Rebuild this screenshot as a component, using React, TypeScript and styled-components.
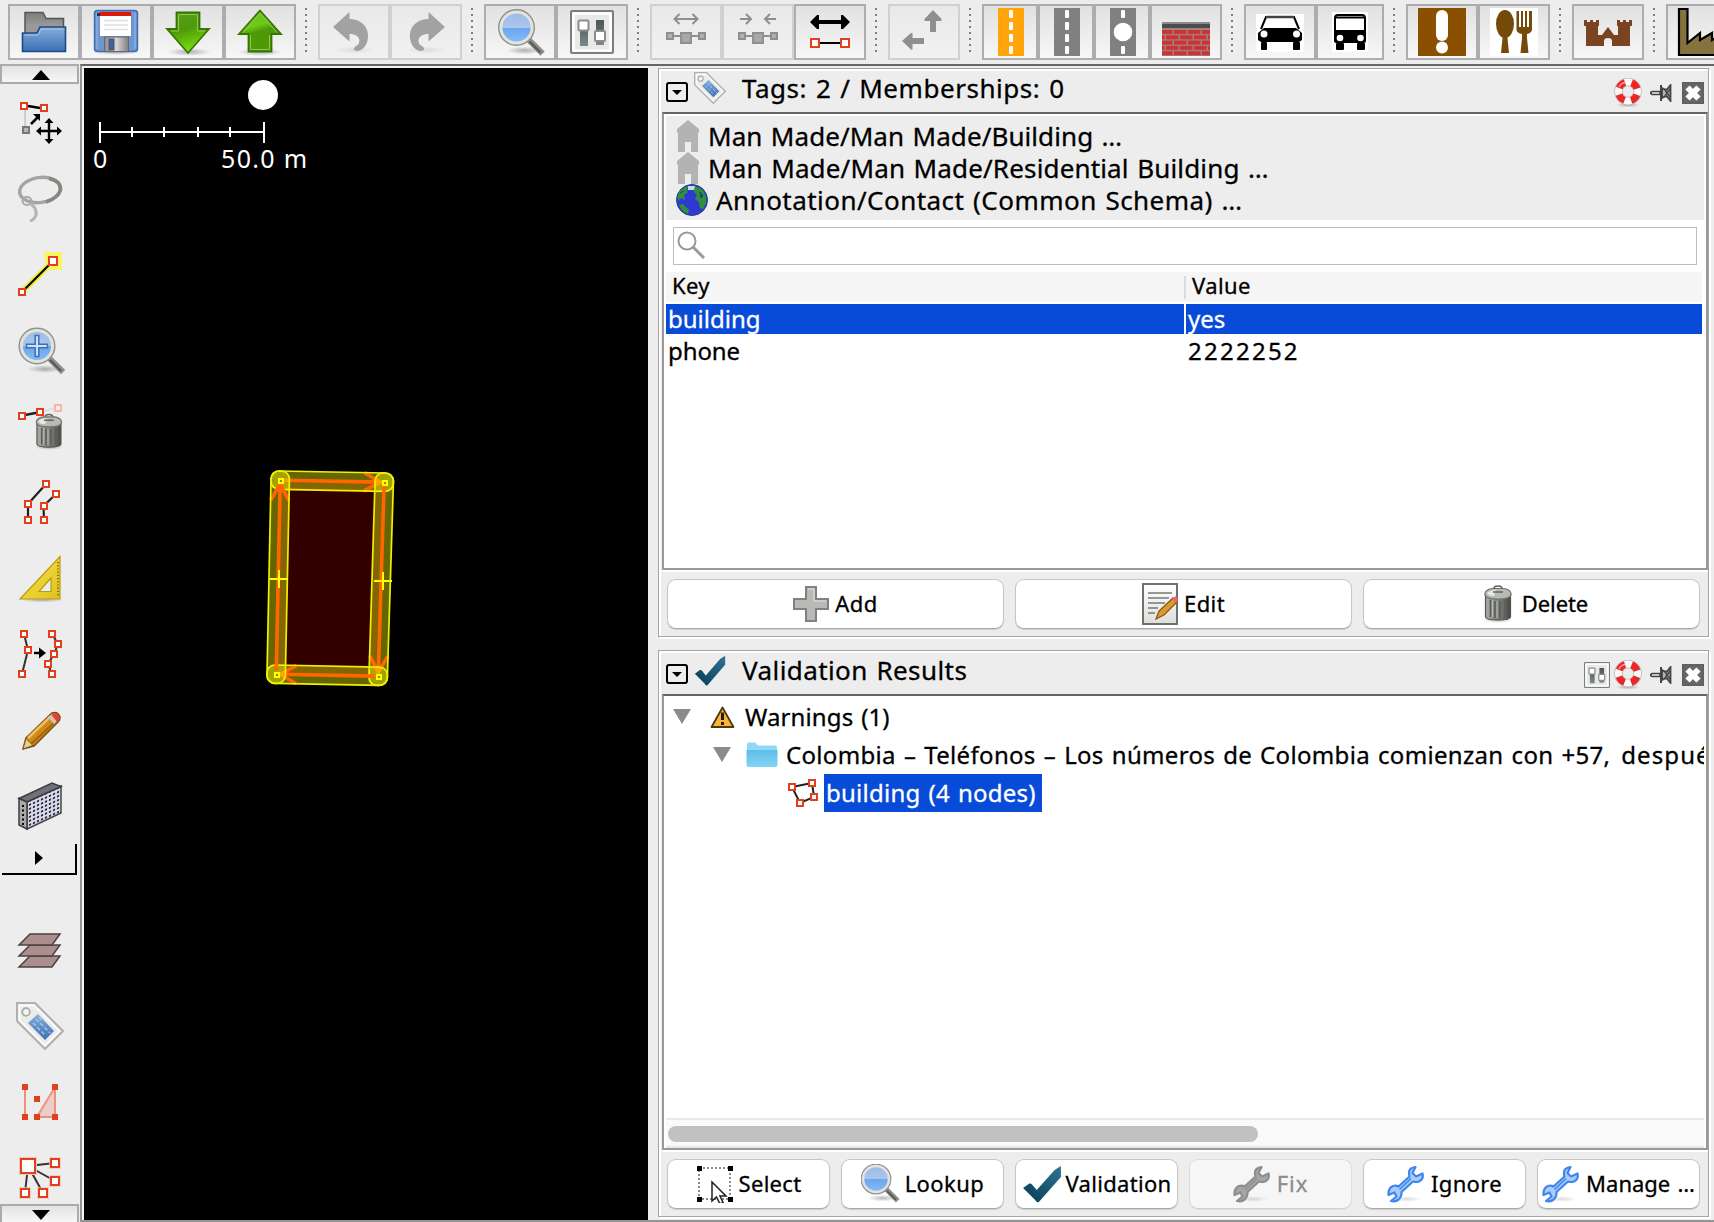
import React from 'react';
import styled, { createGlobalStyle } from 'styled-components';

const Global = createGlobalStyle`
  * { box-sizing: border-box; }
  body { margin: 0; background: #ededed; overflow: hidden; }
  svg { display: block; flex: none; }
`;

const FONT = '"Noto Sans", "Open Sans", sans-serif';

const Window = styled.div`
  width: 1714px; height: 1222px; overflow: hidden; background: #ededed; color: #000;
  font-family: ${FONT}; display: flex; flex-direction: column;
`;
const Toolbar = styled.header`
  height: 64px; flex: none; display: flex; padding: 4px 0 0 8px; overflow: hidden;
`;
const Group = styled.div`display: flex; flex: none; height: 56px;`;
const ToolButton = styled.button<{ $w?: number; $off?: boolean }>`
  width: ${p => p.$w ?? 72}px; height: 56px; flex: none; padding: 0; margin: 0;
  border: 2px solid ${p => (p.$off ? '#d0d0d0' : '#adadad')};
  background: ${p => (p.$off ? 'linear-gradient(#e9e9e9,#f1f1f1)' : 'linear-gradient(#e1e1e1,#f7f7f7)')};
`;
const Separator = styled.div`
  width: 22px; height: 44px; flex: none; margin-top: 4px;
  background: repeating-linear-gradient(#7d7d7d 0 2px, transparent 2px 6px) 9px 0 / 2px 100% no-repeat;
`;
const Main = styled.div`flex: 1; min-height: 0; display: flex;`;
const ToolColumn = styled.nav`
  width: 80px; flex: none; display: flex; flex-direction: column; overflow: hidden;
`;
const ScrollButton = styled.button`
  width: 79px; height: 20px; flex: none; padding: 0; border: 2px solid #ababab;
  background: linear-gradient(#e2e2e2,#f7f7f7);
`;
const Tool = styled.div<{ $h?: number }>`height: ${p => p.$h ?? 76}px; flex: none; overflow: hidden;`;
const Expander = styled.div`
  width: 75px; height: 31px; flex: none; margin: 0 0 38px 2px; border: solid #000; border-width: 0 2px 2px 0;
`;
const Workspace = styled.main`
  flex: 1; min-width: 0; display: flex; border: solid #949494; border-width: 2px 0 2px 2px; border-top-color: #666;
`;
const MapView = styled.section`
  width: 566px; flex: none; padding: 2px 0 0 2px; background: #f4f4f4;
`;
const Side = styled.aside`
  flex: 1; min-width: 0; display: flex; flex-direction: column; gap: 13px; padding: 2px 5px 3px 10px;
`;
const Panel = styled.section<{ $h: number }>`
  height: ${p => p.$h}px; flex: none; border: 1px solid #a6a6a6; display: flex; flex-direction: column;
  box-shadow: 2px 2px 0 #fff, inset 2px 2px 0 #fff;
`;
const PanelHeader = styled.div`
  height: 43px; flex: none; display: flex; align-items: flex-start; padding: 2px 4px 0 7px;
`;
const HeaderIcons = styled.div`margin-left: auto; display: flex; padding-top: 7px; height: 38px;`;
const Content = styled.div`
  flex: 1; min-height: 0; min-width: 0; margin-left: 3px; background: #fff; border: 2px solid #999; border-top-color: #666;
  box-shadow: 0 2px 0 #fff; display: flex; flex-direction: column;
`;
const Actions = styled.div`
  height: 66px; flex: none; display: flex; gap: 11px; padding: 9px 8px 7px 8px;
`;
const Action = styled.button<{ $off?: boolean }>`
  flex: 1 1 0; min-width: 0; height: 50px; padding: 0; display: flex; align-items: center; justify-content: center;
  font-family: inherit; color: ${p => (p.$off ? '#8c8c8c' : '#000')}; overflow: hidden;
  background: ${p => (p.$off ? '#f6f6f6' : '#fff')}; border: 1px solid ${p => (p.$off ? '#dcdcdc' : '#c6c6c6')};
  border-bottom-color: ${p => (p.$off ? '#cfcfcf' : '#a9a9a9')}; border-radius: 9px;
  box-shadow: 0 1px 1px rgba(0,0,0,${p => (p.$off ? 0.05 : 0.14)});
  & > span { padding-bottom: 2px; line-height: 28px; }
`;
const Text = styled.span<{ $s: number; $ls?: number; $lh?: number; $ml?: number }>`
  font-size: ${p => p.$s}px; line-height: ${p => p.$lh ?? 30}px; letter-spacing: ${p => p.$ls ?? 0}px;
  margin-left: ${p => p.$ml ?? 0}px; white-space: pre; flex: none; word-spacing: 1.5px;
  -webkit-text-stroke: 0.3px currentColor;
`;
const Presets = styled.div`background: #ededed; margin: 2px 2px 0; height: 104px; padding: 4px 0 0 10px; flex: none;`;
const Preset = styled.div`display: flex; height: 32px; align-items: center;`;
const Search = styled.div`
  height: 38px; margin: 7px 9px 7px 9px; border: 1px solid #bdbdbd; background: #fff; padding: 3px; flex: none;
`;
const Row = styled.div<{ $selected?: boolean }>`
  display: grid; grid-template-columns: 518px 1fr; gap: 2px; height: 30px; margin: 0 4px 2px 2px; flex: none;
  & > div { padding-left: 2px; display: flex; align-items: center; background: ${p => (p.$selected ? '#084bd9' : '#fff')}; }
  color: ${p => (p.$selected ? '#fff' : '#000')};
`;
const HeadRow = styled.div`
  display: grid; grid-template-columns: 518px 1fr; height: 30px; margin: 0 4px 2px 2px;
  background: #f5f5f5; flex: none; padding-bottom: 3px;
  & > div { padding-left: 6px; display: flex; align-items: center; }
  & > div + div { border-left: 2px solid #dcdcdc; margin-top: 4px; padding-bottom: 4px; }
`;
const Tree = styled.div`flex: 1; min-height: 0; padding: 2px 2px 0; overflow: hidden;`;
const Node = styled.div<{ $indent: number }>`
  height: 38px; display: flex; align-items: center; padding-left: ${p => p.$indent}px; overflow: hidden;
`;
const Selected = styled.span`
  height: 38px; background: #084bd9; color: #fff; display: flex; align-items: center; padding: 0 7px 0 2px; margin-left: 6px; width: 218px;
`;
const Scrollbar = styled.div`
  height: 30px; flex: none; margin: 0 2px; border: solid #e9e9e9; border-width: 2px 0; background: #fafafa; padding: 6px 0 0 2px;
`;
const Thumb = styled.div`width: 590px; height: 16px; border-radius: 8px; background: #c1c1c1;`;
const Spacer = styled.div<{ $w: number }>`width: ${p => p.$w}px; flex: none;`;
const Down = styled.div<{ $y: number }>`padding-top: ${p => p.$y}px;`;

/* ---------- drawing helpers ---------- */
const Sq = ({ x, y, s = 8, c = '#e0401c', f = '#fff' }: { x: number; y: number; s?: number; c?: string; f?: string }) => (
  <rect x={x - s / 2 + 1} y={y - s / 2 + 1} width={s - 2} height={s - 2} fill={f} stroke={c} strokeWidth="2" />
);

const HiddenSvg = styled.svg`position: absolute;`;
const Defs = () => (
  <HiddenSvg width="0" height="0">
    <defs>
      <linearGradient id="blue" x2="0" y2="1"><stop offset="0" stopColor="#86aedb" /><stop offset="1" stopColor="#3a6fb4" /></linearGradient>
      <linearGradient id="gray" x2="0" y2="1"><stop offset="0" stopColor="#7c7c7c" /><stop offset=".6" stopColor="#9a9a9a" /></linearGradient>
      <linearGradient id="green" x2=".3" y2="1"><stop offset="0" stopColor="#5a9e26" /><stop offset=".5" stopColor="#4e9a06" /><stop offset="1" stopColor="#78dc14" /></linearGradient>
      <linearGradient id="greenUp" x2=".3" y2="1"><stop offset="0" stopColor="#6bb52c" /><stop offset=".45" stopColor="#6ccb16" /><stop offset=".6" stopColor="#4e9a06" /><stop offset="1" stopColor="#4e9a06" /></linearGradient>
      <linearGradient id="lens" x2="0" y2="1"><stop offset="0" stopColor="#9dbbe6" /><stop offset=".5" stopColor="#aac6ee" /><stop offset=".52" stopColor="#6ca6ec" /><stop offset="1" stopColor="#85bdf8" /></linearGradient>
      <linearGradient id="can"><stop offset="0" stopColor="#a9aca6" /><stop offset=".35" stopColor="#8b8e88" /><stop offset=".7" stopColor="#6d706a" /><stop offset="1" stopColor="#454843" /></linearGradient>
      <linearGradient id="metal"><stop offset="0" stopColor="#8a8a8a" /><stop offset=".5" stopColor="#d6d6d6" /><stop offset="1" stopColor="#7f7f7f" /></linearGradient>
      <linearGradient id="slot" x2="0" y2="1"><stop offset="0" stopColor="#4d5557" /><stop offset="1" stopColor="#7d8a8a" /></linearGradient>
      <linearGradient id="yellow" x2="1" y2="1"><stop offset="0" stopColor="#f8e94e" /><stop offset="1" stopColor="#dfc01c" /></linearGradient>
      <linearGradient id="folder" x2="0" y2="1"><stop offset="0" stopColor="#5fbde6" /><stop offset="1" stopColor="#85d4f6" /></linearGradient>
      <linearGradient id="check" x1="1" x2="0" y2="1"><stop offset="0" stopColor="#2f7594" /><stop offset="1" stopColor="#083a52" /></linearGradient>
      <linearGradient id="paper" x2="0" y2="1"><stop offset="0" stopColor="#fff" /><stop offset="1" stopColor="#dededa" /></linearGradient>
      <radialGradient id="shade"><stop offset="0" stopColor="#000" stopOpacity=".28" /><stop offset="1" stopColor="#000" stopOpacity="0" /></radialGradient>
      <pattern id="mesh" width="4" height="4" patternUnits="userSpaceOnUse" patternTransform="skewY(-24)"><rect width="4" height="4" fill="#dcdcf2" /><rect x="1" y="1" width="2" height="2" fill="#111" /></pattern>
    </defs>
  </HiddenSvg>
);

const TB = ({ x, w = 72, off, children }: { x: number; w?: number; off?: boolean; children: React.ReactNode }) => (
  <ToolButton $w={w} $off={off}>
    <svg width={w - 4} height="52" viewBox={`${x + 2} 6 ${w - 4} 52`}>{children}</svg>
  </ToolButton>
);

const Lens = ({ plus }: { plus?: boolean }) => (
  <g>
    <ellipse cx="26" cy="41" rx="18" ry="4" fill="url(#shade)" />
    <path d="M30 30 L42 42" stroke="#8d8f8a" strokeWidth="6" strokeLinecap="square" />
    <path d="M31 32 L42 43" stroke="#585a56" strokeWidth="2.4" />
    <circle cx="18" cy="18" r="16" fill="none" stroke="#8f918c" strokeWidth="5" />
    <circle cx="18" cy="18" r="15.6" fill="url(#lens)" stroke="#e2e3dc" strokeWidth="3" />
    {plus && <path d="M16.2 7.5h3.6v8.7h8.7v3.6h-8.7v8.7h-3.6v-8.7H7.500v-3.600h8.700z" fill="#cfe2fa" stroke="#3c6fb4" strokeWidth="1.5" />}
  </g>
);
const Trash = () => (
  <g>
    <ellipse cx="14" cy="35" rx="15" ry="3" fill="url(#shade)" />
    <path d="M1.500 11 V32 Q2 35 14 35 Q26 35 26.500 32 V11z" fill="url(#can)" stroke="#50534e" strokeWidth="1.200" />
    <path d="M6.500 15 V32 M11 16 V33 M16 16 V33 M21 15 V32" stroke="#5b5e58" strokeWidth="1.600" />
    <path d="M8.500 15 V32 M13 16 V33" stroke="#b9bcb6" strokeWidth="1" />
    <path d="M.800 9 Q1.500 4.500 8 3.500 H20 Q26.500 4.500 27.200 9 Q27 14 14 14 Q1 14 .800 9z" fill="#b7bbb3" stroke="#70736d" strokeWidth="1.200" />
    <path d="M3 8 Q6 5 12 5 L10 11 Q4 11 3 8z" fill="#e6e8e2" />
    <path d="M10 3.500 Q10 1 14 1 Q18 1 18 3.500 M9 7 H19" fill="none" stroke="#62655f" strokeWidth="1.500" />
  </g>
);
const Tag = ({ size }: { size: number }) => (
  <svg width={size} height={size} viewBox="0 0 48 48">
    <path d="M1 1 H19 L47 29 L29 47 L1 19z" fill="#ebebe9" stroke="#b0b0ae" strokeWidth="2" />
    <path d="M3.500 3.500 H18 L43.500 29 L29 43.500 L3.500 18z" fill="none" stroke="#fff" strokeWidth="1.500" />
    <circle cx="10" cy="10" r="3.800" fill="#f4f4f4" stroke="#aaa" strokeWidth="1.800" />
    <path d="M22 12 L38 29 L29 38 L12 21z" fill="url(#blue)" />
    <path d="M20 17 L34 31 M17 21 L29 33 M23 15 L27 20" stroke="#a9c4e4" strokeWidth="1.500" strokeDasharray="4 2" />
  </svg>
);
const Prefs = ({ size }: { size: number }) => (
  <svg width={size} height={size} viewBox="0 0 44 44">
    <rect x="1" y="1" width="42" height="42" rx="1" fill="#e9e9e7" stroke="#7b7e7a" strokeWidth="2" />
    <rect x="3.500" y="3.500" width="37" height="37" fill="none" stroke="#fff" strokeWidth="2.500" />
    <rect x="10" y="12" width="8" height="24" fill="url(#slot)" /><rect x="26" y="10" width="8" height="25" fill="url(#slot)" />
    <rect x="8.500" y="10.500" width="10" height="10" rx="1" fill="#fff" stroke="#8a8d89" strokeWidth="2" />
    <rect x="25" y="21" width="10" height="10" rx="1" fill="#fff" stroke="#8a8d89" strokeWidth="2" />
  </svg>
);
const Ring = () => (
  <svg width="28" height="29" viewBox="0 0 28 29">
    <ellipse cx="14" cy="27" rx="12" ry="2.500" fill="url(#shade)" />
    <circle cx="14" cy="13.500" r="9.500" fill="none" stroke="#b5b5b5" strokeWidth="8.500" />
    <circle cx="14" cy="13.500" r="9.500" fill="none" stroke="#fafafa" strokeWidth="7" />
    <circle cx="14" cy="13.500" r="9.500" fill="none" stroke="#ec2626" strokeWidth="7" strokeDasharray="8.200 6.720" strokeDashoffset="-3.400" />
    <path d="M5 9 Q7 5 11 4.500" stroke="#ff9a9a" strokeWidth="1.500" fill="none" />
  </svg>
);
const Pin = () => (
  <svg width="22" height="18" viewBox="0 0 22 18">
    <path d="M0 9 L2 7.500 H10 V10.500 H2z" fill="#ededed" stroke="#444" strokeWidth="1.600" />
    <path d="M11 1 V17" stroke="#444" strokeWidth="2" />
    <path d="M12 4 L15 5.500 H17 L20.500 1 V17 L17 12.500 H15 L12 14z" fill="#b5b5b5" stroke="#444" strokeWidth="1.800" />
    <path d="M15 6 L20 13 M20 5 L15 12" stroke="#444" strokeWidth="1.400" />
  </svg>
);
const Close = () => (
  <svg width="22" height="22" viewBox="0 0 22 22">
    <rect x="1" y="1" width="20" height="20" fill="none" stroke="#606060" strokeWidth="2" />
    <rect x="2" y="2" width="18" height="18" fill="#666" />
    <path d="M5.500 5.500 L16.500 16.500 M16.500 5.500 L5.500 16.500" stroke="#fff" strokeWidth="6" />
  </svg>
);
const Collapse = styled(({ className }: { className?: string }) => (
  <svg className={className} width="22" height="20" viewBox="0 0 22 20">
    <rect x="1" y="1" width="20" height="18" rx="2" fill="none" stroke="#000" strokeWidth="2" />
    <path d="M6 8 H16 L11 13z" fill="#000" />
  </svg>
))`margin-top: 11px;`;
const CheckMark = ({ w, h }: { w: number; h: number }) => (
  <svg width={w} height={h} viewBox="0 0 38 38" preserveAspectRatio="none">
    <path d="M37 1 V12 L16 37 Q14 38 12.500 35 L1 23 L7 18.500 Q9 18 10 20 L14 25 L31 5z" fill="url(#check)" />
  </svg>
);
const Wrench = ({ c = '#3f86ee', l = '#a9ccfa' }: { c?: string; l?: string }) => (
  <svg width="38" height="38" viewBox="0 0 38 38">
    <ellipse cx="20" cy="34" rx="15" ry="3" fill="url(#shade)" opacity=".5" />
    <path d="M28.500 2 L25.500 8 L29 11.500 L35.500 8.500 Q37 14 32 16.500 Q29 17.500 26 16.500 L14.500 27 Q15 32 11 35 Q8 37 4 36 L9.500 31.500 L7.500 27.500 L1.500 30 Q1 23 6 21 Q9 20 11.500 21.500 L22.500 11.500 Q20 3 28.500 2z" fill={l} stroke={c} strokeWidth="2.200" strokeLinejoin="round" />
    <path d="M24 13.500 L12.500 24.500" stroke={c} strokeWidth="1.600" />
  </svg>
);
const House = () => (
  <svg width="24" height="32" viewBox="0 0 24 32">
    <path d="M12 0 L23 9 V13 H22 V32 H15 V22 H9 V32 H2 V13 H1 V9z" fill="#b3b3b3" />
  </svg>
);
const Globe = () => (
  <svg width="32" height="32" viewBox="0 0 32 32">
    <circle cx="16" cy="16" r="15.500" fill="#3038d4" stroke="#23457a" />
    <path d="M3 8 Q8 2 13 2 L11 6 L12 8 L8 11 L9 16 L5 14 L2 17 Q1 12 3 8z M18 2 Q26 4 28 8 Q31 13 30 19 L27 25 L24 24 L23 18 L19 15 L21 11 L18 8z M3 21 L7 20 L13 26 L12 30 Q6 28 3 21z" fill="#2f8f3c" />
    <path d="M12 2 H19 L18 6 H12z" fill="#c9dcee" />
    <path d="M24 8 L27 12 L25 14z M4 9 L8 7" fill="#23457a" stroke="#23457a" />
  </svg>
);

/* ---------- toolbar ---------- */
const undoPath = 'M333 27 L349.500 12 V19 C362 19 369 28 368 38 C367 46 362 51 357 51 C353 51 353 47 357 45.500 C361 43 361 34 349.500 34 V41.500z';
const Road = ({ x, c, dot }: { x: number; c: string; dot?: boolean }) => (
  <g>
    <rect x={x} y="8" width="26" height="48" fill={c} />
    {[10, 22, 34, 46].map(y => <rect key={y} x={x + 11} y={y} width="4" height="8" rx="1" fill="#fff" />)}
    {dot && <><rect x={x + 8} y="20" width="10" height="24" fill={c} /><circle cx={x + 13} cy="32" r="9.300" fill="#fff" /></>}
  </g>
);
const Brick = () => (
  <g>
    <rect x="1162" y="22" width="48" height="34" fill="#a08080" /><rect x="1162" y="22" width="48" height="3" fill="#8a8a8a" /><rect x="1162" y="24" width="48" height="4" fill="#4c4c4c" />
    {[0, 1, 2, 3, 4].map(r => [-1, 0, 1, 2, 3].map(i => {
      const x0 = 1162 + i * 14 + (r % 2 ? 8 : 2) - 4;
      const a = Math.max(1162, x0), b = Math.min(1210, x0 + 12.500);
      return b > a ? <rect key={r + '-' + i} x={a} y={30 + r * 5.300} width={b - a} height="4" fill="#cc3434" /> : null;
    }))}
  </g>
);

const MainToolbar = () => (
  <Toolbar>
    <Group>
      <TB x={8}>
        <path d="M25 30 V12.500 H43 L46 18.500 H63.500 V34 H25z" fill="url(#gray)" stroke="#555" strokeWidth="1.500" />
        <path d="M22.500 51.500 V33 H37 L40 27 H65.500 V51.500z" fill="url(#blue)" stroke="#204a87" strokeWidth="1.600" />
        <path d="M24.500 35 H38 L41 29 H63.500" fill="none" stroke="#a9c6e8" />
      </TB>
      <TB x={80}>
        <ellipse cx="116" cy="52" rx="24" ry="3" fill="url(#shade)" />
        <rect x="94.500" y="10.500" width="43" height="41" rx="3" fill="#6d95d2" stroke="#466db0" strokeWidth="1.500" />
        <path d="M97 13 V49 M135 13 V49" stroke="#9dbbe6" />
        <rect x="100" y="12" width="31" height="4" fill="#dc1a08" /><rect x="97" y="13" width="3" height="3" fill="#17305c" />
        <rect x="100" y="16" width="31" height="20" fill="#fff" /><path d="M104 20.500 H128 M104 25 H128 M104 29.500 H128" stroke="#dedede" strokeWidth="1.500" />
        <rect x="104.500" y="37" width="24" height="14.500" fill="url(#metal)" stroke="#666" strokeWidth="1" /><rect x="109" y="39" width="5" height="11" fill="#3e62a3" stroke="#444" strokeWidth=".700" />
      </TB>
      <TB x={152}>
        <ellipse cx="189" cy="52" rx="22" ry="4" fill="url(#shade)" />
        <path d="M176.500 12.500 H199.500 V29 H209 L188 53 L167 29 H176.500z" fill="url(#green)" stroke="#397404" strokeWidth="1.800" />
        <path d="M178.500 14.500 H197.500 V31 H205 M178.500 14.500 V31 H171" fill="none" stroke="#8ccb52" />
      </TB>
      <TB x={224}>
        <ellipse cx="260" cy="52" rx="22" ry="4" fill="url(#shade)" />
        <path d="M260 10.500 L281 34 H271.500 V51.500 H248.500 V34 H239z" fill="url(#greenUp)" stroke="#397404" strokeWidth="1.800" />
        <path d="M243 32.500 L260 13.500 L277 32.500 M250.500 35 V49.500 H269.500 V35" fill="none" stroke="#8ccb52" />
      </TB>
    </Group>
    <Separator />
    <Group>
      <TB x={318} off><ellipse cx="354" cy="50" rx="20" ry="4" fill="url(#shade)" opacity=".3" /><path d={undoPath} fill="#a2a2a2" /></TB>
      <TB x={390} off><ellipse cx="426" cy="50" rx="20" ry="4" fill="url(#shade)" opacity=".3" /><path d={undoPath} fill="#a2a2a2" transform="translate(778 0) scale(-1 1)" /></TB>
    </Group>
    <Separator />
    <Group>
      <TB x={484}><g transform="translate(498.500 9.500)"><Lens /></g></TB>
      <TB x={556}><svg x="570" y="10" width="44" height="44"><Prefs size={44} /></svg></TB>
    </Group>
    <Separator />
    <Group>
      <TB x={650} off>
        <path d="M675 19 H697 M679.500 14 L674.500 19 L679.500 24 M692.500 14 L697.500 19 L692.500 24" stroke="#8f8f8f" strokeWidth="2" fill="none" />
        <path d="M670 36 H702" stroke="#8f8f8f" strokeWidth="2" />
        <Sq x={670} y={36} c="#8f8f8f" f="#b0b0b0" /><Sq x={686} y={38} s={12} c="#8f8f8f" f="#a8a8a8" /><Sq x={702} y={36} c="#8f8f8f" f="#b0b0b0" />
      </TB>
      <TB x={722} off>
        <path d="M740 19 H751 M746 14 L751 19 L746 24 M776 19 H765 M770 14 L765 19 L770 24" stroke="#8f8f8f" strokeWidth="2" fill="none" />
        <path d="M742 36 H774" stroke="#8f8f8f" strokeWidth="2" />
        <Sq x={742} y={36} c="#8f8f8f" f="#b0b0b0" /><Sq x={758} y={38} s={12} c="#8f8f8f" f="#a8a8a8" /><Sq x={774} y={36} c="#8f8f8f" f="#b0b0b0" />
      </TB>
      <TB x={794}>
        <path d="M816 22 H844" stroke="#000" strokeWidth="4" /><path d="M810 22 L817 15 H819 V29 H817z M850 22 L843 15 H841 V29 H843z" />
        <path d="M818 43 H842" stroke="#000" strokeWidth="2" /><Sq x={815} y={43} s={10} /><Sq x={845} y={43} s={10} />
      </TB>
    </Group>
    <Separator />
    <Group>
      <TB x={888} off>
        <path d="M933 10 L941.500 19 V21 H936 V32 H930 V21 H924.500 V19z M902 41 L911 33 H912.500 V38 H924 V44 H912.500 V49.500 H911z" fill="#8f8f8f" />
      </TB>
    </Group>
    <Separator />
    <Group>
      <TB x={982} w={56}><Road x={998} c="#ffa50a" /></TB>
      <TB x={1038} w={56}><Road x={1054} c="#808080" /></TB>
      <TB x={1094} w={56}><Road x={1110} c="#808080" dot /></TB>
      <TB x={1150}><Brick /></TB>
    </Group>
    <Separator />
    <Group>
      <TB x={1244}>
        <rect x="1256" y="14" width="48" height="38" fill="#fff" />
        <path d="M1261 29 L1266 17 H1294 L1299 29" fill="#fff" stroke="#000" strokeWidth="2" /><path d="M1266 17 H1294" stroke="#444" strokeWidth="2.500" />
        <path d="M1264 28 H1296 L1302 33 V40 L1299 42 H1261 L1258 40 V33z" /><rect x="1261" y="42" width="6" height="8" rx="1" /><rect x="1293" y="42" width="7" height="8" rx="1" />
        <circle cx="1264" cy="34" r="3.500" fill="#fff" /><circle cx="1296.500" cy="34" r="3.500" fill="#fff" />
      </TB>
      <TB x={1316} w={68}>
        <rect x="1332" y="12" width="36" height="40" fill="#fff" />
        <rect x="1335" y="15" width="30" height="20" rx="3" fill="#fff" stroke="#000" strokeWidth="2" /><path d="M1336 17.500 H1364" stroke="#000" strokeWidth="2" />
        <path d="M1334 30 H1366 V41 Q1366 43 1364 43 H1336 Q1334 43 1334 41z" /><rect x="1336" y="43" width="8" height="7" rx="1" /><rect x="1357" y="43" width="8" height="7" rx="1" />
        <circle cx="1340" cy="38" r="3.300" fill="#fff" /><circle cx="1360.500" cy="38" r="3.300" fill="#fff" />
      </TB>
    </Group>
    <Separator />
    <Group>
      <TB x={1406}><rect x="1418" y="8" width="48" height="48" fill="#8a5000" /><rect x="1436" y="10" width="12" height="31" rx="6" fill="#fff" /><circle cx="1442" cy="47.500" r="6" fill="#fff" /></TB>
      <TB x={1478}>
        <rect x="1490" y="8" width="48" height="48" fill="#fff" />
        <g fill="#734a08"><ellipse cx="1505" cy="24" rx="9" ry="14" /><path d="M1502.500 34 H1507.500 V38 L1509 53 H1501 L1502.500 38z" />
          <path d="M1516.500 11 H1519 V27 H1521 V11 H1523 V27 H1525 V11 H1527 V27 H1529 V11 H1532 V30 Q1531 33 1527 34 V38 L1528.500 53 H1520.500 L1522 38 V34 Q1517 33 1516.500 30z" /></g>
      </TB>
    </Group>
    <Separator />
    <Group>
      <TB x={1572}>
        <path d="M1584 20 H1587 V22 H1590 V20 H1593 V22 H1596 V20 H1599 V26 H1598 V35 H1602 L1608 27 L1614 35 H1618 V26 H1617 V20 H1620 V22 H1623 V20 H1626 V22 H1629 V20 H1632 V26 H1630 V46 H1612 V41 Q1612 38 1608 38 Q1604 38 1604 41 V46 H1586 V26 H1584z" fill="#7a4423" />
      </TB>
    </Group>
    <Separator />
    <Group>
      <TB x={1666}>
        <path d="M1679 55 V9 H1687.500 V43 L1700 33 V40 L1712 33 V40 L1724 33 V55z" fill="#85723f" stroke="#000" strokeWidth="2.200" />
      </TB>
    </Group>
  </Toolbar>
);

/* ---------- left column ---------- */
const tools: React.ReactNode[] = [
  <g key="0">
    <path d="M25 110 V128" stroke="#c4c4c4" strokeWidth="1.500" /><path d="M28 106 L40 108" stroke="#000" strokeWidth="2.500" />
    <Sq x={24} y={106} /><Sq x={44} y={108} /><Sq x={26} y={130} c="#777" f="#b5b5b5" />
    <path d="M31 124 L38 117" stroke="#000" strokeWidth="2.500" /><path d="M33 114 H40 V121z" />
    <path d="M49 121 V141 M39 131 H59" stroke="#000" strokeWidth="2.400" />
    <path d="M49 118 L53.500 123 H44.500z M49 144 L53.500 139 H44.500z M36 131 L41 126.500 V135.500z M62 131 L57 126.500 V135.500z" />
  </g>,
  <g key="1" fill="none">
    <ellipse cx="40" cy="190" rx="20.500" ry="12.500" transform="rotate(-8 40 190)" stroke="#a3a5a0" strokeWidth="3.400" />
    <path d="M49 178.500 Q61 181 60.500 190 Q58 198 46 202" stroke="#858781" strokeWidth="3.600" />
    <ellipse cx="27" cy="201" rx="4.500" ry="4" stroke="#a7a9a4" strokeWidth="2" /><path d="M31 204 Q37 208 36 215 Q34 220 30 221" stroke="#b4b6b1" strokeWidth="3.200" />
  </g>,
  <g key="2">
    <path d="M22 292 L52 262" stroke="#f4ef2c" strokeWidth="6" /><path d="M44 252 H62 V270 H46z" fill="#f8f560" /><path d="M22 292 L50 264" stroke="#000" strokeWidth="2.200" />
    <Sq x={53} y={261} s={10} /><Sq x={22} y={292} />
  </g>,
  <g key="3" transform="translate(19 328)"><Lens plus /></g>,
  <g key="4">
    <path d="M44 411 L56 408" stroke="#ddd" strokeWidth="2" /><path d="M25 415 L38 412.500" stroke="#222" strokeWidth="2.600" />
    <g transform="translate(35.500 413.500) scale(.96)"><Trash /></g>
    <Sq x={58} y={408} c="#f7b4a8" f="#fbeeec" /><Sq x={40} y={412} /><Sq x={22} y={416} />
  </g>,
  <g key="5">
    <path d="M46 484 L28 504 V520 M56 494 L43.500 506 L44 520" fill="none" stroke="#222" strokeWidth="2.200" />
    <Sq x={46} y={484} /><Sq x={28} y={504} /><Sq x={28} y={520} /><Sq x={56} y={494} /><Sq x={44} y={506} /><Sq x={44} y={520} />
  </g>,
  <g key="6">
    <ellipse cx="42" cy="600" rx="22" ry="2.500" fill="url(#shade)" />
    <path d="M60 556.500 V599 H20z M51 578 L39 591.500 H51z" fill="url(#yellow)" fillRule="evenodd" stroke="#b99a16" strokeWidth="1.200" />
    <path d="M58 562 V597" stroke="#8d7406" strokeWidth="2" strokeDasharray="1.200 2" />
  </g>,
  <g key="7">
    <path d="M24 634 L28 650 L22 674 M52 634 L58 644 L54 654 L48 664 L52 674" fill="none" stroke="#333" strokeWidth="2" />
    <path d="M34 653 H42" stroke="#000" strokeWidth="2.400" /><path d="M39 647.500 L46 653 L39 658.500z" />
    {[[24, 634], [28, 650], [22, 674], [52, 634], [58, 644], [54, 654], [48, 664], [52, 674]].map(([x, y]) => <Sq key={`${x}-${y}`} x={x} y={y} />)}
  </g>,
  <g key="8">
    <path d="M23 749 L26 738 L52 713 Q58 711 60 717 Q60 721 57 723 L34 746z" fill="#d08a1c" stroke="#7c4e0b" strokeWidth="1.500" />
    <path d="M28 738 L50 717" stroke="#f0bf62" strokeWidth="2.500" /><path d="M31 744 L55 722" stroke="#a3640c" strokeWidth="2" />
    <path d="M23 749 L26 738.500 L33 745.500z" fill="#e8cf8f" stroke="#7c5a20" /><path d="M48 717 L52 714 L58 720 L54 724z" fill="#cfc8c0" />
    <path d="M51.500 715 Q57 711 59.500 717 Q59.500 720 57 722z" fill="#ef3b3b" />
  </g>,
  <g key="9">
    <path d="M27 802 L61 786 V813 L27 829z" fill="url(#mesh)" stroke="#444" strokeWidth="1.500" /><path d="M19 798.500 L52 783 L61 786.500 L27 802z" fill="#717179" stroke="#3c3c40" strokeWidth="1.500" />
    <path d="M19 798.500 L27 802 V829 L19 825z" fill="#a9a9a9" stroke="#3c3c40" strokeWidth="1.500" /><path d="M23 805 V825" stroke="#000" strokeWidth="2" strokeDasharray="2 2.500" />
  </g>,
];
const dialogs: React.ReactNode[] = [
  <g key="0" fill="#ad8e8e" stroke="#4c4242" strokeWidth="1.500">
    {[957, 946, 935].map(y => <path key={y} d={`M19 ${y + 10} L30 ${y - 1} H60 L52 ${y + 10}z`} />)}
  </g>,
  <svg key="1" x="16" y="1002" width="48" height="48"><Tag size={48} /></svg>,
  <g key="2">
    <path d="M25 1087 V1117" stroke="#ee9080" strokeWidth="2" /><path d="M55 1087 V1117 H37z" fill="#eccdc7" stroke="#ee9080" strokeWidth="2" />
    {[[25, 1087], [55, 1087], [37, 1099], [25, 1117], [37, 1117], [55, 1117]].map(([x, y]) => <rect key={`${x}-${y}`} x={x - 3} y={y - 3} width="6" height="6" fill="#e0401c" />)}
  </g>,
  <g key="3">
    <path d="M28 1166 L55 1163 M28 1166 L55 1181 M28 1166 L43 1193 M28 1166 L25 1193" stroke="#333" strokeWidth="2" />
    {[[55, 1163], [55, 1181], [43, 1193], [25, 1193]].map(([x, y]) => <g key={`${x}-${y}`}><rect x={x - 6} y={y - 6} width="12" height="12" fill="#f0c4bb" opacity=".7" /><Sq x={x} y={y} s={10} /></g>)}
    <rect x="19" y="1157" width="18" height="18" fill="#f0c4bb" /><Sq x={28} y={1166} s={16} />
  </g>,
];

const LeftTools = () => (
  <ToolColumn>
    <ScrollButton><svg width="75" height="16" viewBox="2 66 75 16"><path d="M41 70 L50 80 H32z" /></svg></ScrollButton>
    {tools.map((t, i) => <Tool key={i}><svg width="80" height="76" viewBox={`0 ${84 + 76 * i} 80 76`}>{t}</svg></Tool>)}
    <Expander><svg width="72" height="29" viewBox="2 844 72 29"><path d="M35 851 L43 858 L35 865z" /></svg></Expander>
    {dialogs.map((t, i) => {
      const h = i === 3 ? 63 : 76;
      return <Tool key={i} $h={h}><svg width="80" height={h} viewBox={`0 ${913 + 76 * i} 80 ${h}`}>{t}</svg></Tool>;
    })}
    <ScrollButton><svg width="75" height="16" viewBox="2 1206 75 16"><path d="M32 1210 H50 L41 1220z" /></svg></ScrollButton>
  </ToolColumn>
);

/* ---------- map ---------- */
type P = [number, number];
const nodes: P[] = [[281, 481], [385, 483], [379, 677], [277, 675]];
const Capsule = ({ a, b }: { a: P; b: P }) => {
  const len = Math.hypot(b[0] - a[0], b[1] - a[1]);
  const ang = (Math.atan2(b[1] - a[1], b[0] - a[0]) * 180) / Math.PI;
  return (
    <g transform={`translate(${a[0] - 0.8} ${a[1] - 0.8}) rotate(${ang})`}>
      <rect x="-9.200" y="-9.200" width={len + 18.4} height="18.400" rx="8" fill="#ffff00" fillOpacity=".4" />
      <path d={`M4 0 H${len - 2} M${len - 20} -9 L${len - 4} 0 L${len - 20} 9`} fill="none" stroke="#ff6600" strokeWidth="3.600" />
      <rect x="-9.200" y="-9.200" width={len + 18.4} height="18.400" rx="8" fill="none" stroke="#f0f000" strokeWidth="1.700" />
    </g>
  );
};
const Canvas = () => (
  <svg width="564" height="1152" viewBox="84 68 564 1152">
    <rect x="84" y="68" width="564" height="1152" fill="#000" />
    <circle cx="263" cy="95" r="15" fill="#fff" />
    <path d="M100 132 H265 M100 122 V143 M264 122 V143 M132 127 V137 M164 127 V137 M198 127 V137 M230 127 V137" stroke="#fff" strokeWidth="2" fill="none" />
    <g fill="#fff" fontFamily={FONT} fontSize="25"><text x="93" y="168">0</text><text x="221" y="168" letterSpacing="1.35">50.0 m</text></g>
    <path d={'M' + nodes.map(n => n.join(' ')).join('L') + 'z'} fill="#330000" />
    {nodes.map((n, i) => <Capsule key={i} a={n} b={nodes[(i + 1) % 4]} />)}
    <path d="M270 579 H288 M279 570 V588 M374 581 H392 M383 572 V590" stroke="#ffff00" strokeWidth="2" />
    {nodes.map((n, i) => <rect key={i} x={n[0] - 2} y={n[1] - 2} width="4" height="4" fill="#a08000" stroke="#ffff00" strokeWidth="2" />)}
  </svg>
);

/* ---------- side panels ---------- */
const TagsPanel = () => (
  <Panel $h={569}>
    <PanelHeader>
      <Collapse />
      <Spacer $w={6} />
      <Down $y={1}><Tag size={32} /></Down>
      <Text $s={26} $ls={0.55} $lh={34} $ml={16}>Tags: 2 / Memberships: 0</Text>
      <HeaderIcons><Ring /><Spacer $w={8} /><Down $y={6}><Pin /></Down><Spacer $w={10} /><Down $y={4}><Close /></Down></HeaderIcons>
    </PanelHeader>
    <Content>
      <Presets>
        <Preset><House /><Text $s={26} $ls={0.08} $ml={8}>Man Made/Man Made/Building …</Text></Preset>
        <Preset><House /><Text $s={26} $ls={0.16} $ml={8}>Man Made/Man Made/Residential Building …</Text></Preset>
        <Preset><Globe /><Text $s={26} $ls={0.46} $ml={8}>Annotation/Contact (Common Schema) …</Text></Preset>
      </Presets>
      <Search>
        <svg width="30" height="30" viewBox="0 0 30 30"><circle cx="10" cy="10" r="8.500" fill="none" stroke="#9a9a9a" strokeWidth="2" /><path d="M16 16 L27 27" stroke="#9a9a9a" strokeWidth="3" /></svg>
      </Search>
      <HeadRow><div><Text $s={22} $lh={19} $ls={0.3}>Key</Text></div><div><Text $s={22} $lh={19} $ls={0.4}>Value</Text></div></HeadRow>
      <Row $selected><div><Text $s={24}>building</Text></div><div><Text $s={24}>yes</Text></div></Row>
      <Row><div><Text $s={24} $ls={-0.1}>phone</Text></div><div><Text $s={24} $ls={2.25}>2222252</Text></div></Row>
    </Content>
    <Actions>
      <Action>
        <svg width="36" height="38" viewBox="0 0 36 38"><path d="M13 2 H23 V14 H35 V24 H23 V36 H13 V24 H1 V14 H13z" fill="#b9b9b7" stroke="#80827e" strokeWidth="2" /><path d="M15 4 H21 V16 H33" fill="none" stroke="#e2e2e0" /></svg>
        <Text $s={22} $ls={0.5} $ml={6}>Add</Text>
      </Action>
      <Action>
        <svg width="36" height="42" viewBox="0 0 36 42">
          <rect x="1" y="1" width="34" height="40" fill="url(#paper)" stroke="#6f716d" strokeWidth="2" />
          <path d="M6 10 H30 M6 15 H27 M6 20 H23 M6 25 H16 M6 30 H13" stroke="#777975" strokeWidth="1.700" />
          <path d="M14 36 L17 28 L31 15 L35 19 L22 32z" fill="#dd9a2a" stroke="#85571a" strokeWidth="1.300" /><path d="M30 16 L34 13 L36 17 L34 20z" fill="#f06464" />
        </svg>
        <Text $s={22} $ls={0.4} $ml={6}>Edit</Text>
      </Action>
      <Action>
        <Spacer $w={9} />
        <svg width="28" height="38" viewBox="0 0 28 38"><Trash /></svg>
        <Text $s={22} $ls={-0.1} $ml={10}>Delete</Text>
      </Action>
    </Actions>
  </Panel>
);
const Tri = () => <svg width="18" height="16" viewBox="0 0 18 16"><path d="M0 0 H18 L9 15z" fill="#8b8b8b" /></svg>;

const ValidationPanel = () => (
  <Panel $h={567}>
    <PanelHeader>
      <Collapse />
      <Spacer $w={6} />
      <Down $y={2}><CheckMark w={32} h={31} /></Down>
      <Text $s={26} $ls={0.42} $lh={34} $ml={16}>Validation Results</Text>
      <HeaderIcons><Down $y={2}><Prefs size={26} /></Down><Spacer $w={4} /><Ring /><Spacer $w={8} /><Down $y={6}><Pin /></Down><Spacer $w={10} /><Down $y={4}><Close /></Down></HeaderIcons>
    </PanelHeader>
    <Content>
      <Tree>
        <Node $indent={7}>
          <Tri /><Spacer $w={19} />
          <svg width="25" height="22" viewBox="0 0 25 22"><path d="M12.500 1.500 L23.500 21 H1.500z" fill="#f9b43c" stroke="#4e3a12" strokeWidth="1.800" strokeLinejoin="round" /><path d="M12.500 6.500 V14" stroke="#2a1c04" strokeWidth="3" /><rect x="11" y="16" width="3" height="3" fill="#2a1c04" /></svg>
          <Text $s={24} $ls={0.12} $ml={10}>Warnings (1)</Text>
        </Node>
        <Node $indent={47}>
          <Tri /><Spacer $w={15} />
          <svg width="32" height="26" viewBox="0 0 32 26"><path d="M1 22 V2 Q1 .500 3 .500 H9 L12 3.500 H29 Q31 3.500 31 5 V22z" fill="#8ed8f8" /><path d="M.500 8 H31.500 V23 Q31.500 25 30 25 H2 Q.500 25 .500 23z" fill="url(#folder)" /></svg>
          <Text $s={24} $ls={0.32} $ml={8}>Colombia – Teléfonos – Los números de Colombia comienzan con +57,</Text>
          <Text $s={24} $ls={1.1} $ml={2}> después</Text>
        </Node>
        <Node $indent={122}>
          <svg width="30" height="28" viewBox="0 0 30 28"><path d="M4 8 L24 4 L26 18 L12 24z" fill="none" stroke="#222" strokeWidth="2" /><Sq x={4} y={8} /><Sq x={24} y={4} /><Sq x={26} y={18} /><Sq x={12} y={24} /></svg>
          <Selected><Text $s={24} $ls={0.25}>building (4 nodes)</Text></Selected>
        </Node>
      </Tree>
      <Scrollbar><Thumb /></Scrollbar>
    </Content>
    <Actions>
      <Action>
        <svg width="38" height="38" viewBox="0 0 38 38">
          <rect x="3" y="3" width="31" height="31" fill="none" stroke="#8a8a8a" strokeWidth="2" strokeDasharray="2 2" />
          {[[1, 1], [32, 1], [1, 32], [32, 32]].map(([x, y]) => <rect key={`${x}-${y}`} x={x} y={y} width="5" height="5" />)}
          <path d="M16 17 V36 L20.500 32 L24 39 L27 37.500 L24 31 H30z" fill="#fff" stroke="#222" strokeWidth="1.500" />
        </svg>
        <Text $s={22} $ls={0.3} $ml={5}>Select</Text>
      </Action>
      <Action><svg width="40" height="40" viewBox="0 0 48 48"><Lens /></svg><Text $s={22} $ls={0.45} $ml={4}>Lookup</Text></Action>
      <Action><CheckMark w={40} h={38} /><Text $s={22} $ls={0.3} $ml={4}>Validation</Text></Action>
      <Action $off><Wrench c="#8e8e8e" l="#a6a6a6" /><Text $s={22} $ls={1} $ml={6}>Fix</Text></Action>
      <Action><Wrench /><Text $s={22} $ls={0.34} $ml={6}>Ignore</Text></Action>
      <Action><Wrench /><Text $s={22} $ml={6}>Manage …</Text></Action>
    </Actions>
  </Panel>
);

export default function App() {
  return (
    <Window>
      <Global />
      <Defs />
      <MainToolbar />
      <Main>
        <LeftTools />
        <Workspace>
          <MapView><Canvas /></MapView>
          <Side><TagsPanel /><ValidationPanel /></Side>
        </Workspace>
      </Main>
    </Window>
  );
}
